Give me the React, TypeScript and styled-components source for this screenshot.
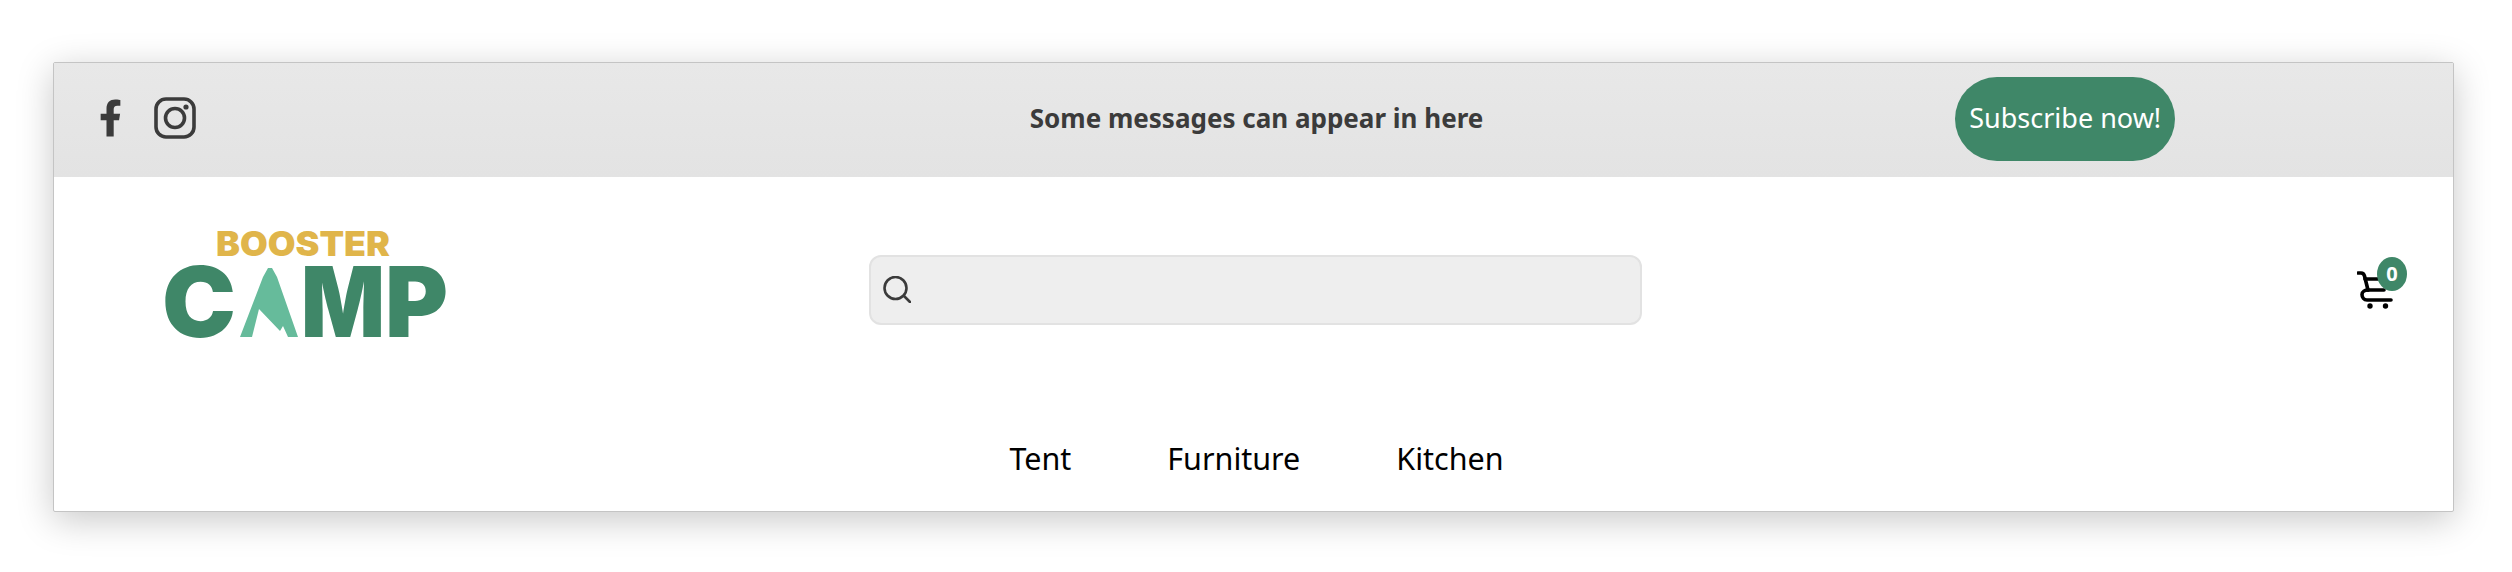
import React from 'react'
import styled, {createGlobalStyle} from 'styled-components'
import {FaFacebookF} from 'react-icons/fa'

const GlobalStyle = createGlobalStyle`
    html, body {
        margin: 0;
        background: #fff;
        font-family: "Noto Sans", "Open Sans", sans-serif;
    }
`

const GREEN = '#3f8768'

const Page = styled.div`
    padding: 62px 58px 60px 53px;
    width: 2512px;
    height: 572px;
    box-sizing: border-box;
    overflow: hidden;
`

const Card = styled.div`
    height: 450px;
    box-sizing: border-box;
    display: flex;
    flex-direction: column;
    background: #fff;
    border: 1px solid #c4c4c4;
    border-radius: 2px;
    box-shadow: 0 8px 36px rgba(0, 0, 0, 0.22);
`

const TopBar = styled.div`
    height: 114px;
    box-sizing: border-box;
    padding-bottom: 4px;
    display: grid;
    grid-template-columns: 1fr 1fr 1fr;
    align-items: center;
    background: linear-gradient(#e8e8e8, #e3e3e3);
`

const Socials = styled.div`
    display: flex;
    align-items: center;
    gap: 32px;
    padding-left: 45px;
    color: #3b3b3b;
`

const FacebookIco = styled(FaFacebookF)`
    width: 23px;
    height: 38px;
`

const Message = styled.p`
    margin: 0;
    padding-left: 6px;
    text-align: center;
    font-size: 26px;
    font-weight: 700;
    color: #3b3b3b;
`

const SubscribeCell = styled.div`
    display: flex;
    justify-content: center;
    padding: 2px 0 0 24px;
`

const SubscribeButton = styled.button`
    width: 220px;
    height: 84px;
    padding: 0 0 3px;
    border: none;
    border-radius: 42px;
    background: ${GREEN};
    color: #fff;
    font-family: inherit;
    font-size: 27px;
`

const Header = styled.div`
    display: grid;
    grid-template-columns: 1fr 1fr 1fr;
    align-items: center;
    padding-top: 54px;
`

const LogoCell = styled.div`
    padding-left: 111px;
`

const SearchCell = styled.div`
    display: flex;
    justify-content: center;
    padding: 7px 0 0 4px;
`

const SearchBox = styled.div`
    width: 773px;
    height: 70px;
    box-sizing: border-box;
    display: flex;
    align-items: center;
    padding-left: 12px;
    background: #eeeeee;
    border: 2px solid #e2e2e2;
    border-radius: 12px;
    color: #3b3b3b;
`

const CartCell = styled.div`
    display: flex;
    justify-content: flex-end;
    padding: 7px 60px 0 0;
`

const CartWrap = styled.div`
    position: relative;
    width: 36px;
    height: 38px;
`

const Badge = styled.span`
    position: absolute;
    top: -14px;
    left: 20px;
    width: 30px;
    height: 34px;
    border-radius: 50%;
    background: ${GREEN};
    color: #fff;
    font-size: 20px;
    font-weight: 700;
    line-height: 34px;
    text-align: center;
`

const Nav = styled.nav`
    display: flex;
    justify-content: center;
    gap: 96px;
    padding: 96px 0 0 6px;
`

const NavLink = styled.a`
    font-size: 30.5px;
    line-height: 42px;
    color: #000;
`

const InstagramIco = () => (
    <svg width="42" height="42" viewBox="0 0 42 42" fill="none" stroke="currentColor" strokeWidth="3.6">
        <rect x="2" y="2" width="38" height="38" rx="10" />
        <circle cx="21" cy="21" r="9.5" />
        <circle cx="32" cy="10" r="2.6" fill="currentColor" stroke="none" />
    </svg>
)

const SearchIco = () => (
    <svg width="28" height="27" viewBox="0 0 28 27" fill="none" stroke="currentColor" strokeWidth="2.6" strokeLinecap="round">
        <circle cx="12.5" cy="12" r="11" />
        <path d="M21 20l6 6" />
    </svg>
)

const CartIco = () => (
    <svg width="36" height="38" viewBox="0 0 36 38" fill="none" stroke="#000" strokeWidth="3.6" strokeLinecap="round" strokeLinejoin="round">
        <path d="M1 2h3c2 0 3 1 3.500 3L11 19" />
        <path d="M8 8h16" />
        <path d="M11 19h16" />
        <path d="M11 19c-3 0-6 1.500-6 4.500S7 29 10 29h24" />
        <circle cx="13" cy="35" r="2.700" fill="#000" stroke="none" />
        <circle cx="28.500" cy="35" r="2.700" fill="#000" stroke="none" />
    </svg>
)

const LogoSvg = styled.svg`
    display: block;
    overflow: visible;
`

const LogoText = styled.text`
    font-family: Inter, "Noto Sans", sans-serif;
    font-weight: 900;
`

const Logo = () => (
    <LogoSvg width="284" height="110" viewBox="0 0 284 110">
        <LogoText x="51" y="25" fontSize="34" fill="#e0b54a" textLength="174" lengthAdjust="spacingAndGlyphs">BOOSTER</LogoText>
        <LogoText x="-3" y="106" fontSize="98" fill={GREEN} textLength="74" lengthAdjust="spacingAndGlyphs">C</LogoText>
        <polygon
            points="75,106 87,106 94,78 115,100 118,95 123,106 133,106 112,46 107,37 103,37 98,46"
            fill="#66bb9b"
        />
        <LogoText x="136" y="106" fontSize="98" fill={GREEN} textLength="84" lengthAdjust="spacingAndGlyphs">M</LogoText>
        <LogoText x="220" y="106" fontSize="98" fill={GREEN} textLength="63" lengthAdjust="spacingAndGlyphs">P</LogoText>
    </LogoSvg>
)

export default function App() {
    return (
        <Page>
            <GlobalStyle />
            <Card>
                <TopBar>
                    <Socials>
                        <FacebookIco />
                        <InstagramIco />
                    </Socials>
                    <Message>Some messages can appear in here</Message>
                    <SubscribeCell>
                        <SubscribeButton>Subscribe now!</SubscribeButton>
                    </SubscribeCell>
                </TopBar>
                <Header>
                    <LogoCell><Logo /></LogoCell>
                    <SearchCell>
                        <SearchBox><SearchIco /></SearchBox>
                    </SearchCell>
                    <CartCell>
                        <CartWrap>
                            <CartIco />
                            <Badge>0</Badge>
                        </CartWrap>
                    </CartCell>
                </Header>
                <Nav>
                    <NavLink>Tent</NavLink>
                    <NavLink>Furniture</NavLink>
                    <NavLink>Kitchen</NavLink>
                </Nav>
            </Card>
        </Page>
    )
}
